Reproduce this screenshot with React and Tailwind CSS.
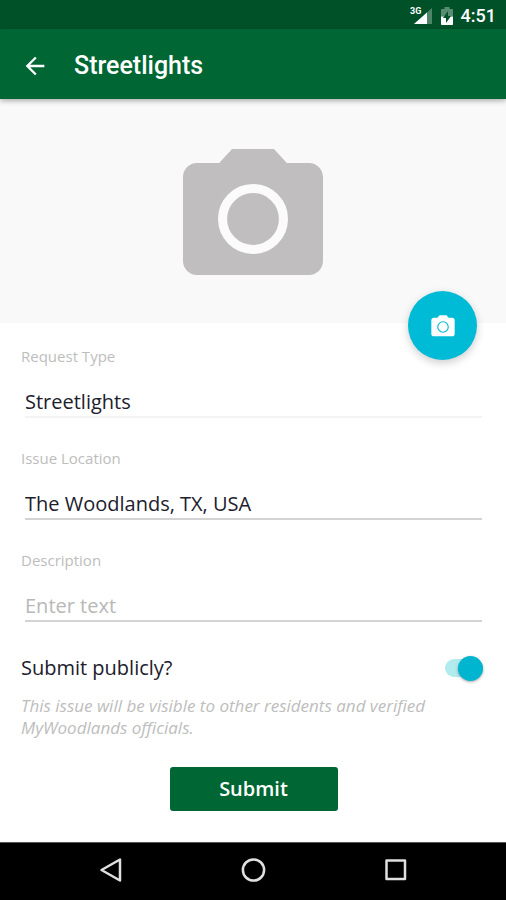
import { useState } from 'react';

const CameraIcon = ({ className, ringColor, ringWidth }) => (
    <svg className={className} viewBox="0 0 24 24" aria-hidden="true">
        <path
            fill="currentColor"
            d="M9 2L7.17 4H4c-1.1 0-2 .9-2 2v12c0 1.1.9 2 2 2h16c1.1 0 2-.9 2-2V6c0-1.1-.9-2-2-2h-3.17L15 2H9z"
        />
        <circle cx="12" cy="12" r={5 - ringWidth / 2} fill="none" stroke={ringColor} strokeWidth={ringWidth} />
    </svg>
);

function StatusBar() {
    return (
        <div className="flex h-[29px] items-center justify-end bg-[#005128] pr-[10px] pt-[2px] text-white">
            <svg className="h-5 w-6" viewBox="0 0 24 20" aria-hidden="true">
                <path d="M23 2V18H5z" fill="#fff" fillOpacity="0.3" />
                <path d="M18 6.500V18H5z" fill="#fff" />
                <text x="1" y="8" fontSize="9" fontWeight="700" fontFamily="Roboto, sans-serif" fill="#fff">3G</text>
            </svg>
            <svg className="ml-2 h-5 w-3" viewBox="0 0 12 20" aria-hidden="true">
                <path d="M3.500 1h5v2H11c.6 0 1 .4 1 1v6.500H0V4c0-.6.4-1 1-1h2.500z" fill="#fff" fillOpacity="0.35" />
                <path d="M0 10.500h12V18c0 .6-.4 1-1 1H1c-.6 0-1-.4-1-1z" fill="#fff" />
                <path d="M7 5v5h3l-5 7v-5H2z" fill="#005128" />
            </svg>
            <span className="ml-2 text-[18px] leading-6 font-medium">4:51</span>
        </div>
    );
}

function AppBar({ title }) {
    return (
        <header className="relative z-10 flex h-[70px] items-center bg-[#006633] pl-[21px] pt-[3px] text-white shadow-[0_2px_5px_rgba(0,0,0,0.3)]">
            <button type="button" aria-label="Back" className="h-7 w-7">
                <svg viewBox="0 0 24 24" className="h-7 w-7" fill="currentColor" aria-hidden="true">
                    <path d="M20 11H7.830l5.590-5.590L12 4l-8 8 8 8 1.410-1.410L7.830 13H20v-2z" />
                </svg>
            </button>
            <h1 className="ml-[25px] text-[25px] leading-8 font-medium">{title}</h1>
        </header>
    );
}

function Field({ id, label, lineClass, ...inputProps }) {
    return (
        <div className="flex flex-col gap-5">
            <label htmlFor={id} className="text-[15px] leading-5 text-[#bdbdbd]">{label}</label>
            <input
                id={id}
                type="text"
                className={`mx-1 h-8 border-b-2 bg-transparent text-[20px] text-[#20202c] outline-none placeholder:text-[#b8b8b8] ${lineClass}`}
                {...inputProps}
            />
        </div>
    );
}

function NavBar() {
    return (
        <nav className="flex h-[58px] items-center justify-center gap-[114px] border-t border-[#555] bg-black pb-[3px] text-[#e0e0e0]">
            <button type="button" aria-label="Back">
                <svg className="h-7 w-7" viewBox="0 0 28 28" fill="none" stroke="currentColor" strokeWidth="2.500" strokeLinejoin="round" aria-hidden="true">
                    <path d="M23 3.500v21L4.500 14z" />
                </svg>
            </button>
            <button type="button" aria-label="Home">
                <svg className="h-7 w-7" viewBox="0 0 28 28" fill="none" stroke="currentColor" strokeWidth="2.500" aria-hidden="true">
                    <circle cx="14.500" cy="14" r="10.600" />
                </svg>
            </button>
            <button type="button" aria-label="Recent apps">
                <svg className="h-7 w-7" viewBox="0 0 28 28" fill="none" stroke="currentColor" strokeWidth="2.500" strokeLinejoin="round" aria-hidden="true">
                    <rect x="5.500" y="4.500" width="18.500" height="18.500" />
                </svg>
            </button>
        </nav>
    );
}

export default function App() {
    const [location, setLocation] = useState('The Woodlands, TX, USA');
    const [description, setDescription] = useState('');
    const [isPublic, setIsPublic] = useState(true);

    return (
        <div className="flex min-h-screen flex-col bg-white font-['Roboto',sans-serif]">
            <StatusBar />
            <AppBar title="Streetlights" />

            <main className="flex-1 font-['Open_Sans',sans-serif]">
                <div className="relative flex h-56 items-center justify-center bg-[#f9f9f9] pt-4">
                    <CameraIcon className="h-[168px] w-[168px] text-[#c0bebf]" ringColor="#fbfbfb" ringWidth={1.3} />
                    <button
                        type="button"
                        aria-label="Add photo"
                        className="absolute right-[29px] -bottom-[37px] flex h-[69px] w-[69px] items-center justify-center rounded-full bg-[#00bbd5] pt-[2px] text-white shadow-[0_3px_8px_rgba(0,0,0,0.2)]"
                    >
                        <CameraIcon className="h-7 w-7" ringColor="#00bbd5" ringWidth={1} />
                    </button>
                </div>

                <form className="flex flex-col pt-[23px] pr-5 pb-[31px] pl-[21px]" onSubmit={(e) => e.preventDefault()}>
                    <div className="flex flex-col gap-[30px]">
                        <Field id="type" label="Request Type" lineClass="border-[#f3f3f3]" value="Streetlights" readOnly />
                        <Field
                            id="location"
                            label="Issue Location"
                            lineClass="border-[#d3d3d3]"
                            value={location}
                            onChange={(e) => setLocation(e.target.value)}
                        />
                        <Field
                            id="description"
                            label="Description"
                            lineClass="border-[#d3d3d3]"
                            placeholder="Enter text"
                            value={description}
                            onChange={(e) => setDescription(e.target.value)}
                        />
                    </div>

                    <label className="mt-8 flex h-7 items-center justify-between pr-[3px] text-[20px] leading-7 text-[#20202c]">
                        Submit publicly?
                        <input
                            type="checkbox"
                            role="switch"
                            checked={isPublic}
                            onChange={(e) => setIsPublic(e.target.checked)}
                            className="peer sr-only"
                        />
                        <span className="flex h-[18px] w-[38px] items-center rounded-full bg-[#d0d0d0] peer-checked:justify-end peer-checked:bg-[#b2ebee]">
                            <span className={`h-[25px] w-[25px] rounded-full shadow-[0_1px_3px_rgba(0,0,0,0.35)] ${isPublic ? 'bg-[#00b5cf]' : 'bg-[#fafafa]'}`} />
                        </span>
                    </label>
                    <p className="mt-[13px] text-[17px] leading-[22px] text-[#bdbdbd] italic">
                        This issue will be visible to other residents and verified MyWoodlands officials.
                    </p>

                    <button
                        type="submit"
                        className="mt-7 h-11 w-[168px] self-center rounded-[3px] bg-[#006633] text-[20px] leading-7 font-semibold text-white"
                    >
                        Submit
                    </button>
                </form>
            </main>

            <NavBar />
        </div>
    );
}
